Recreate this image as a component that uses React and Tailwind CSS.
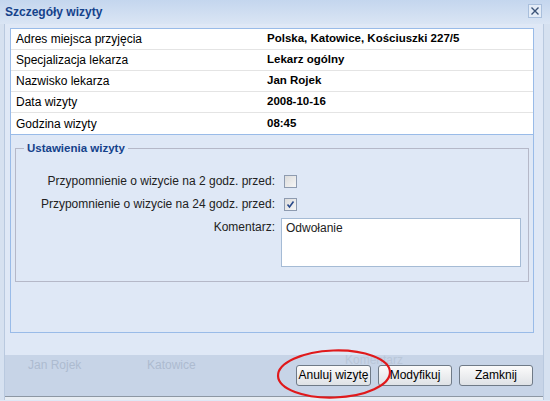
export default function App() {
    const rows = [
        ['Adres miejsca przyjęcia', 'Polska, Katowice, Kościuszki 227/5'],
        ['Specjalizacja lekarza', 'Lekarz ogólny'],
        ['Nazwisko lekarza', 'Jan Rojek'],
        ['Data wizyty', '2008-10-16'],
        ['Godzina wizyty', '08:45'],
    ];

    return (
        <div className="relative w-[550px] h-[401px] overflow-hidden bg-[#dfe8f6] font-['Liberation_Sans',Arial,sans-serif] text-black">
            {/* Pasek tytułu */}
            <div className="flex items-center h-[24px] pl-[5px] pr-[8px] bg-gradient-to-b from-[#c4d6ee] to-[#dae5f4]">
                <span className="text-[12px] font-bold text-[#15428b]">Szczegóły wizyty</span>
                <button className="ml-auto mt-[-2px] w-[14px] h-[14px] flex items-center justify-center border border-[#a9bfdc] bg-[#e4ecf7]">
                    <svg width="10" height="10" viewBox="0 0 10 10">
                        <path d="M1.5 1.5 L8.5 8.5 M8.5 1.5 L1.5 8.5" stroke="#3a5277" strokeWidth="1.4" />
                    </svg>
                </button>
            </div>

            <div className="flex">
                {/* lewa ramka */}
                <div className="w-[5px] border-r border-[#b9c9df] bg-[#d6e1f0]"></div>

                <div className="flex flex-col">
                    {/* Główny panel */}
                    <div className="ml-[5px] mt-[4px] w-[524px] h-[305px] border border-[#99bbe8]">
                        <div className="bg-white border-b border-[#99bbe8]">
                            {rows.map(([label, value], i) => (
                                <div
                                    key={label}
                                    className={`flex items-center h-[21px] text-[12px] ${i < rows.length - 1 ? 'border-b border-[#e4e4e4]' : ''}`}
                                >
                                    <span className="w-[256px] pl-[5px]">{label}</span>
                                    <span className="font-bold text-[11.5px]">{value}</span>
                                </div>
                            ))}
                        </div>

                        <fieldset className="mx-[4px] mt-[7px] border border-[#b5b8c8] pb-[14px]">
                            <legend className="ml-[8px] px-[3px] text-[11.5px] leading-[13px] font-bold text-[#15428b]">
                                Ustawienia wizyty
                            </legend>
                            <div className="grid grid-cols-[259px_1fr] gap-x-[9px] text-[12px] text-[#222] mt-[20px]">
                                <span className="text-right leading-[13px]">Przypomnienie o wizycie na 2 godz. przed:</span>
                                <span className="w-[13px] h-[13px] border border-[#8e9bb0] bg-gradient-to-br from-[#dcdcdc] to-[#f6f6f6]"></span>

                                <span className="text-right leading-[13px] mt-[10px]">Przypomnienie o wizycie na 24 godz. przed:</span>
                                <span className="mt-[10px] w-[13px] h-[13px] border border-[#8e9bb0] bg-gradient-to-br from-[#dcdcdc] to-[#f6f6f6] flex items-center justify-center">
                                    <svg width="9" height="9" viewBox="0 0 9 9">
                                        <path d="M1.5 4.5 L3.5 7 L7.5 1.5" stroke="#29498a" strokeWidth="1.6" fill="none" />
                                    </svg>
                                </span>

                                <span className="text-right mt-[9px] leading-[14px]">Komentarz:</span>
                                <div className="mt-[7px] -ml-[3px] w-[240px] h-[49px] border border-[#a5bbd5] bg-white px-[4px] pt-[2px] leading-[14px]">
                                    Odwołanie
                                </div>
                            </div>
                        </fieldset>
                    </div>

                    {/* Stopka */}
                    <div className="relative mt-[22px] h-[41px] w-[538px] bg-[#c7d4e7] flex items-center">
                        <span className="absolute left-[23px] top-[1px] text-[12px] text-[#adbbd0]">Jan Rojek</span>
                        <span className="absolute left-[142px] top-[1px] text-[12px] text-[#adbbd0]">Katowice</span>
                        <span className="absolute left-[340px] top-[-4px] text-[12px] text-[#b9c6d8]">Komentarz</span>
                        <div className="relative ml-auto mr-[10px] mt-[-1px] flex gap-[7px] text-[12px]">
                            <button className="w-[75px] h-[21px] rounded-[3px] border border-[#6f7a87] bg-gradient-to-b from-[#fbfbfb] to-[#dfe2e6]">
                                Anuluj wizytę
                            </button>
                            <button className="w-[74px] h-[21px] rounded-[3px] border border-[#6f7a87] bg-gradient-to-b from-[#fbfbfb] to-[#dfe2e6]">
                                Modyfikuj
                            </button>
                            <button className="w-[74px] h-[21px] rounded-[3px] border border-[#6f7a87] bg-gradient-to-b from-[#fbfbfb] to-[#dfe2e6]">
                                Zamknij
                            </button>
                        </div>
                    </div>
                    <div className="h-[4px] border-t border-[#8d97a3] bg-[#e8edf3]"></div>
                </div>

                {/* prawa ramka */}
                <div className="flex-1 border-l border-[#b9c9df] bg-[#d6e1f0]"></div>
            </div>

            {/* czerwone zaznaczenie */}
            <svg className="absolute left-[274px] top-[347px] pointer-events-none" width="122" height="54" viewBox="0 0 122 54">
                <ellipse cx="60" cy="27" rx="56" ry="23.5" transform="rotate(-2 60 27)" fill="none" stroke="#e0191b" strokeWidth="2.2" />
            </svg>
        </div>
    );
}
